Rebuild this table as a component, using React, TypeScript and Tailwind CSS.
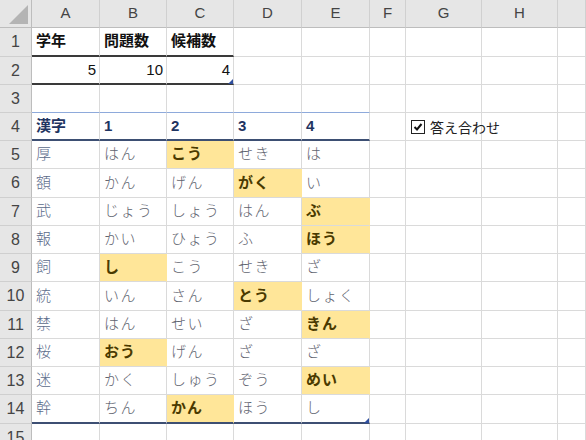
import React from "react";

type CellDef = { t?: string; k?: "kanji" | "kana" | "hit" | "head" | "title" | "num"; cls?: string };

const cols = ["A", "B", "C", "D", "E", "F", "G", "H", ""];
const rowHeights = [
  "h-[29px]", "h-[28px]", "h-[28px]", "h-[28px]", "h-[28px]", "h-[29px]", "h-[28px]",
  "h-[28px]", "h-[28px]", "h-[29px]", "h-[28px]", "h-[28px]", "h-[28px]", "h-[29px]", "h-[28px]",
];

const quiz: string[][] = [
  ["厚", "はん", "*こう", "せき", "は"],
  ["額", "かん", "げん", "*がく", "い"],
  ["武", "じょう", "しょう", "はん", "*ぶ"],
  ["報", "かい", "ひょう", "ふ", "*ほう"],
  ["飼", "*し", "こう", "せき", "ざ"],
  ["統", "いん", "さん", "*とう", "しょく"],
  ["禁", "はん", "せい", "ざ", "*きん"],
  ["桜", "*おう", "げん", "ざ", "ざ"],
  ["迷", "かく", "しゅう", "ぞう", "*めい"],
  ["幹", "ちん", "*かん", "ほう", "し"],
];

function buildRows(): CellDef[][] {
  const rows: CellDef[][] = [];
  rows.push([
    { t: "学年", k: "title", cls: "border-b-2 border-b-[#3a3a3a]" },
    { t: "問題数", k: "title", cls: "border-b-2 border-b-[#3a3a3a]" },
    { t: "候補数", k: "title", cls: "border-b-2 border-b-[#3a3a3a]" },
  ]);
  rows.push([
    { t: "5", k: "num", cls: "border-b-2 border-b-[#3a3a3a]" },
    { t: "10", k: "num", cls: "border-b-2 border-b-[#3a3a3a]" },
    { t: "4", k: "num", cls: "border-b-2 border-b-[#3a3a3a] tri" },
  ]);
  rows.push([1, 2, 3, 4, 5].map(() => ({ cls: "border-b-[#8eaadb]" })));
  rows.push(
    ["漢字", "1", "2", "3", "4"].map((t) => ({ t, k: "head" as const, cls: "border-b-2 border-b-[#3d4f73]" }))
  );
  quiz.forEach((r, i) => {
    const last = i === quiz.length - 1;
    rows.push(
      r.map((v, j) => {
        const hit = v.startsWith("*");
        const cell: CellDef = {
          t: hit ? v.slice(1) : v,
          k: j === 0 ? "kanji" : hit ? "hit" : "kana",
          cls: last ? "border-b-2 border-b-[#3d4f73]" : "",
        };
        if (last && j === 4) cell.cls += " tri";
        return cell;
      })
    );
  });
  rows.push([]);
  return rows;
}

const textStyle: Record<string, string> = {
  title: "font-bold text-[#111] justify-start pl-[4px]",
  num: "text-[#111] justify-end pr-[3px]",
  head: "font-bold text-[#1f3461] justify-start pl-[4px]",
  kanji: "font-light text-[#5b6b8a] justify-start pl-[4px]",
  kana: "font-light text-[#5f6470] justify-start pl-[4px] tracking-[1.5px]",
  hit: "font-bold text-[#4a3a00] justify-start pl-[4px] tracking-[1px] bg-[#ffe699] border-r-[#ffe699]",
};

export default function App() {
  const rows = buildRows();
  return (
    <div className="relative w-[586px] h-[440px] overflow-hidden bg-white font-['Liberation_Sans','Noto_Sans_CJK_JP',sans-serif]">
      <div className="grid grid-cols-[32px_68px_67px_67px_68px_68px_36px_76px_76px_1fr]">
        <div className="h-[28px] bg-[#e6e6e6] border-r border-b border-[#bdbdbd] relative">
          <svg className="absolute right-[3px] bottom-[3px]" width="19" height="19" viewBox="0 0 16 16">
            <polygon points="16,0 16,16 0,16" fill="#b4b4b4" />
          </svg>
        </div>
        {cols.map((c, i) => (
          <div
            key={i}
            className="h-[28px] bg-[#e6e6e6] border-r border-b border-r-[#d0d0d0] border-b-[#bdbdbd] flex items-center justify-center text-[15px] text-[#444]"
          >
            {c}
          </div>
        ))}
        {rows.map((r, ri) => (
          <React.Fragment key={ri}>
            <div
              className={`${rowHeights[ri]} bg-[#e6e6e6] border-r border-b border-r-[#bdbdbd] border-b-[#cfcfcf] flex items-center justify-center text-[16px] text-[#444]`}
            >
              {ri + 1}
            </div>
            {cols.map((_, ci) => {
              const d = r[ci];
              const base = "relative border-r border-b border-[#dadada] flex items-center text-[15px] whitespace-nowrap";
              if (!d) return <div key={ci} className={`${rowHeights[ri]} ${base}`} />;
              return (
                <div key={ci} className={`${rowHeights[ri]} ${base} ${d.k ? textStyle[d.k] : ""} ${d.cls ?? ""}`}>
                  {d.t}
                  {d.cls?.includes("tri") && (
                    <svg className="absolute right-[0px] bottom-[-1px]" width="5" height="5" viewBox="0 0 5 5">
                      <polygon points="5,0 5,5 0,5" fill="#2f4f9f" />
                    </svg>
                  )}
                </div>
              );
            })}
          </React.Fragment>
        ))}
      </div>

      <div className="absolute left-[411px] top-[120px] flex items-center gap-[5px]">
        <div className="w-[14px] h-[14px] border-[1.5px] border-[#222] bg-white flex items-center justify-center">
          <svg width="10" height="10" viewBox="0 0 10 10">
            <path d="M1.5 5 L4 7.5 L8.5 2" fill="none" stroke="#111" strokeWidth="2" />
          </svg>
        </div>
        <span className="text-[14px] text-[#222] font-['Noto_Sans_CJK_JP',sans-serif] leading-none">答え合わせ</span>
      </div>
    </div>
  );
}
